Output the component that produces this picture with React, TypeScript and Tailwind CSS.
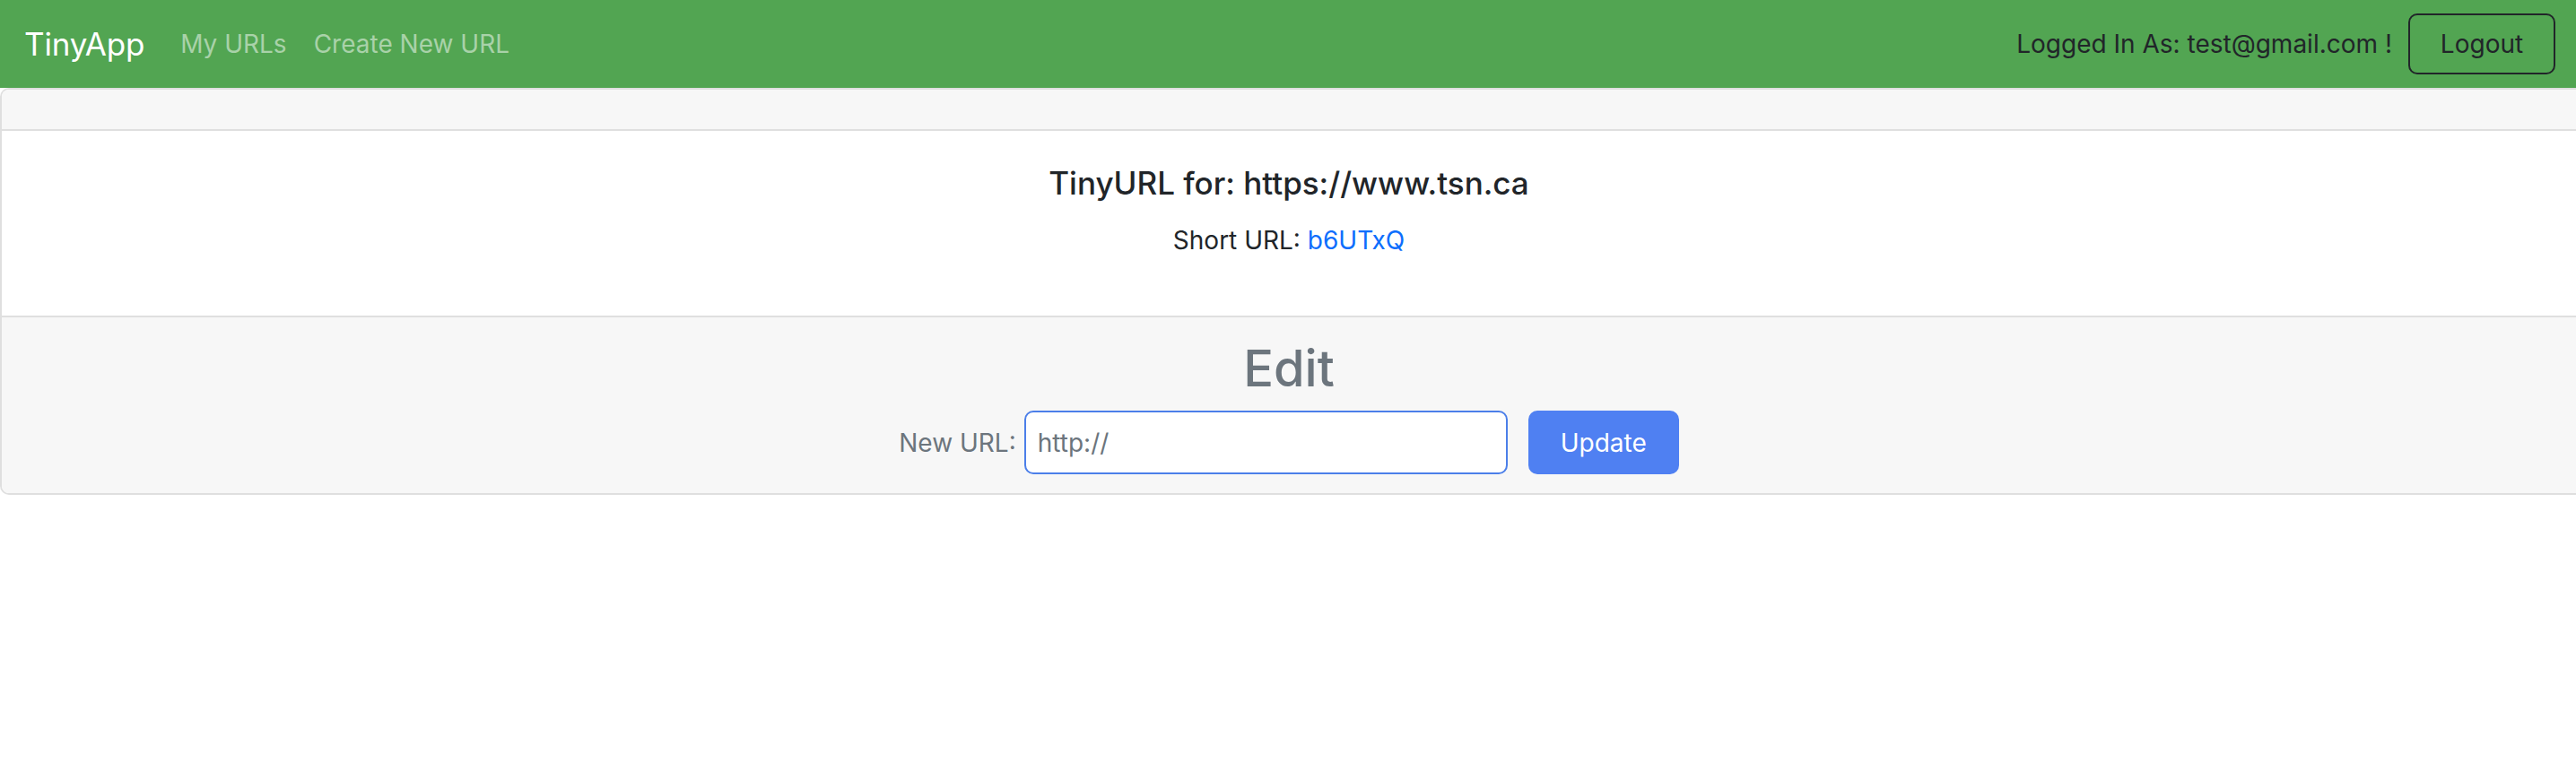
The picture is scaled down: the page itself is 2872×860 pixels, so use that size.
import React from 'react';

const NavBar: React.FC = () => {
  return (
    <nav className="h-[98px] bg-[#52a552] flex items-center justify-between pl-[27px] pr-[23px]">
      <div className="flex items-center">
        <a className="text-[35px] leading-none text-white mr-[40px] tracking-[-0.2px]">TinyApp</a>
        <a className="text-[28px] leading-none text-[#a9d2a9] mr-[30px]">My URLs</a>
        <a className="text-[28px] leading-none text-[#a9d2a9]">Create New URL</a>
      </div>
      <div className="flex items-center gap-[18px]">
        <span className="text-[28px] leading-none text-[#212529]">Logged In As: test@gmail.com !</span>
        <button className="h-[68px] w-[164px] border-2 border-[#212529] rounded-[10px] text-[28px] text-[#212529]">
          Logout
        </button>
      </div>
    </nav>
  );
};

const App: React.FC = () => {
  return (
    <div className="min-h-screen bg-white font-['Inter','Noto_Sans',sans-serif]">
      <NavBar />

      {/* card */}
      <div className="border-y-2 border-l-2 border-[#dfdfdf] rounded-l-[10px] overflow-hidden">
        {/* header */}
        <div className="h-[46px] bg-[#f7f7f7] border-b-2 border-[#dfdfdf]" />

        {/* body */}
        <div className="h-[206px] bg-white text-center pt-[37px]">
          <h5 className="text-[35px] font-medium leading-[1.2] text-[#212529]">
            TinyURL for: https://www.tsn.ca
          </h5>
          <p className="mt-[22px] text-[28px] leading-[1.5] text-[#212529]">
            Short URL: <a className="text-[#0d6efd]">b6UTxQ</a>
          </p>
        </div>

        {/* footer */}
        <div className="h-[198px] bg-[#f7f7f7] border-t-2 border-[#dfdfdf] pt-[24px] flex flex-col items-center">
          <h2 className="text-[56px] font-medium leading-[1.2] text-[#6c757d]">Edit</h2>
          <form className="mt-[13px] flex items-center">
            <label className="text-[28px] text-[#6c757d] mr-[9px]">New URL:</label>
            <input
              type="text"
              defaultValue="http://"
              className="h-[71px] w-[539px] bg-white border-2 border-[#4c7fe9] rounded-[10px] px-[13px] text-[28px] text-[#6c757d] outline-none"
            />
            <button
              type="button"
              className="ml-[23px] h-[71px] w-[168px] bg-[#4f80f2] rounded-[10px] text-[28px] text-white"
            >
              Update
            </button>
          </form>
        </div>
      </div>
    </div>
  );
};

export default App;
